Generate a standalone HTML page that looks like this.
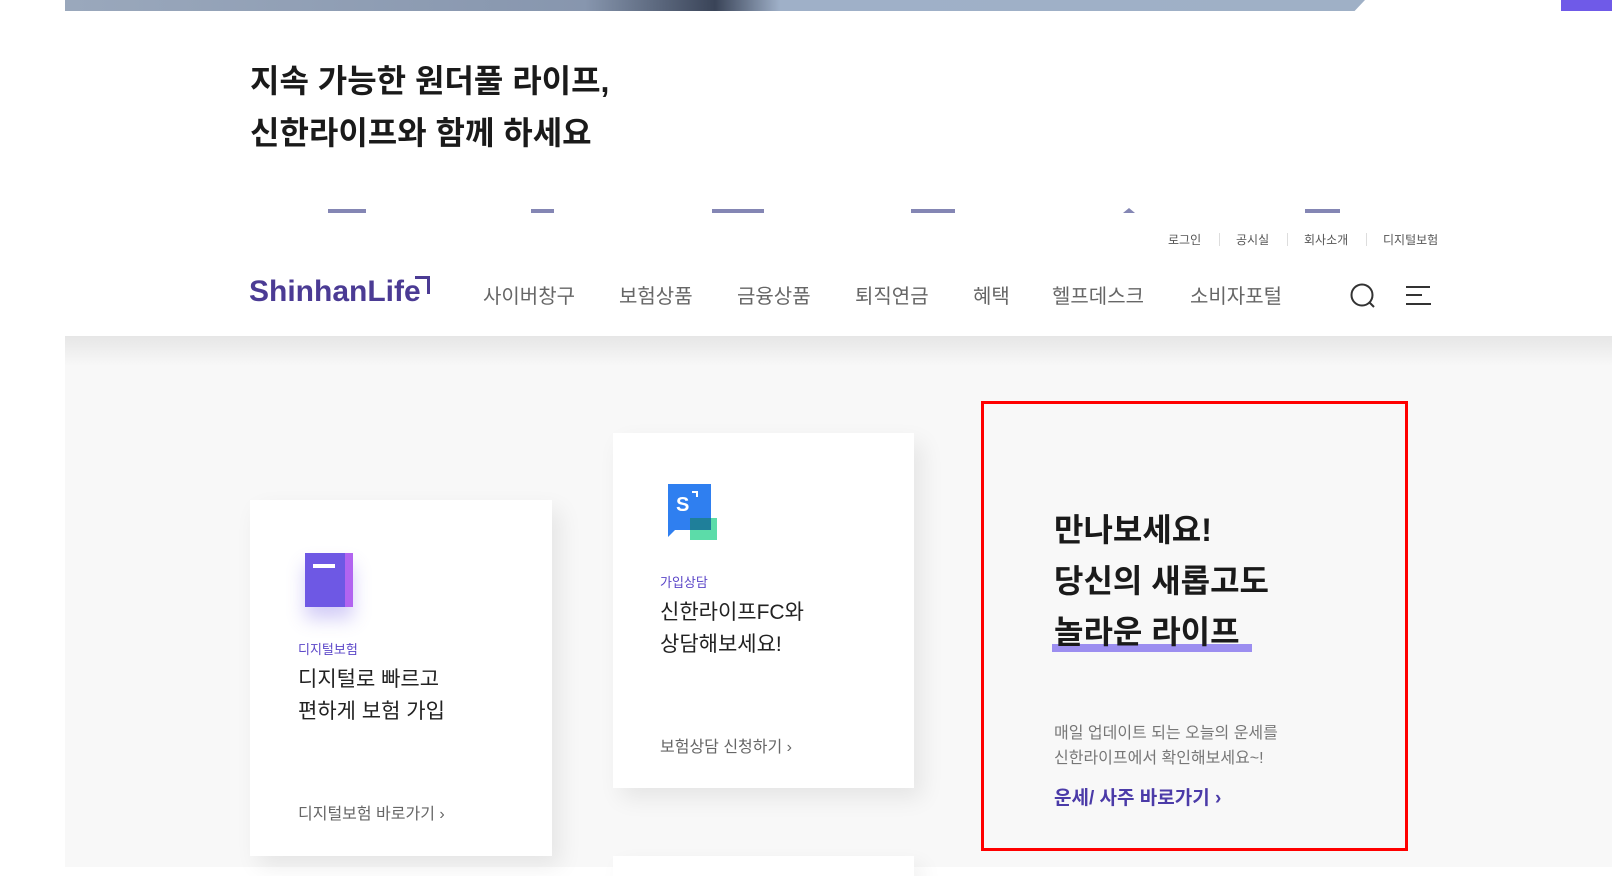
<!DOCTYPE html>
<html><head><meta charset="utf-8"><style>
*{margin:0;padding:0;box-sizing:border-box}
body{width:1612px;height:867px;overflow:hidden;background:#fff;position:relative;font-family:"Liberation Sans","Noto Sans CJK KR",sans-serif;color:#222}
.a{position:absolute;white-space:nowrap}
.bar{position:absolute;top:209px;height:4px;background:#8486b4}
.nav{font-size:20px;color:#666;top:280px}
.util{font-size:12px;color:#555;top:231px}
.sep{position:absolute;top:233px;width:1px;height:13px;background:#ddd}
.card{position:absolute;background:#fff;box-shadow:8px 10px 22px rgba(0,0,0,0.08)}
</style></head><body>
<div class="a" style="left:65px;top:0;width:1300px;height:11px;background:linear-gradient(90deg,#9aa8bc 0%,#8796ae 40%,#3a4458 50%,#9fb0c8 55%,#9fb0c6 100%);clip-path:polygon(0 0,100% 0,99.2% 100%,0 100%)"></div>
<div class="a" style="left:1561px;top:0;width:51px;height:11px;background:#6f5ae8"></div>
<div class="a" style="left:250px;top:55px;font-size:32px;font-weight:bold;line-height:52px;color:#1a1a1a">지속 가능한 원더풀 라이프,<br>신한라이프와 함께 하세요</div>
<div class="bar" style="left:328px;width:38px"></div>
<div class="bar" style="left:531px;width:23px"></div>
<div class="bar" style="left:712px;width:52px"></div>
<div class="bar" style="left:911px;width:44px"></div>
<div class="a" style="left:1123px;top:208px;width:0;height:0;border-left:6px solid transparent;border-right:6px solid transparent;border-bottom:5px solid #8486b4"></div>
<div class="bar" style="left:1305px;width:35px"></div>
<div class="a util" style="left:1168px">로그인</div>
<div class="sep" style="left:1219px"></div>
<div class="a util" style="left:1236px">공시실</div>
<div class="sep" style="left:1287px"></div>
<div class="a util" style="left:1304px">회사소개</div>
<div class="sep" style="left:1366px"></div>
<div class="a util" style="left:1383px">디지털보험</div>
<div class="a" style="left:249px;top:275px;font-size:30px;font-weight:bold;color:#4b3b94">ShinhanLife</div>
<div class="a" style="left:415px;top:276px;width:15px;height:18px;border-top:3px solid #4b3b94;border-right:3px solid #4b3b94"></div>
<div class="a nav" style="left:483px">사이버창구</div>
<div class="a nav" style="left:619px">보험상품</div>
<div class="a nav" style="left:737px">금융상품</div>
<div class="a nav" style="left:855px">퇴직연금</div>
<div class="a nav" style="left:973px">혜택</div>
<div class="a nav" style="left:1052px">헬프데스크</div>
<div class="a nav" style="left:1190px">소비자포털</div>
<svg class="a" style="left:1348px;top:281px" width="30" height="30" viewBox="0 0 30 30"><circle cx="14" cy="14" r="10.5" fill="none" stroke="#333" stroke-width="2"/><line x1="21.5" y1="21.5" x2="26" y2="26" stroke="#333" stroke-width="2"/></svg>
<svg class="a" style="left:1404px;top:284px" width="28" height="24"><line x1="2" y1="3" x2="26" y2="3" stroke="#333" stroke-width="2"/><line x1="2" y1="11" x2="18" y2="11" stroke="#333" stroke-width="2"/><line x1="2" y1="20" x2="27" y2="20" stroke="#333" stroke-width="2"/></svg>
<div class="a" style="left:65px;top:336px;width:1547px;height:531px;background:#f8f8f8"></div>
<div class="a" style="left:65px;top:336px;width:1547px;height:30px;background:linear-gradient(#e6e6e6,#f8f8f8)"></div>
<div class="card" style="left:250px;top:500px;width:302px;height:356px"></div>
<div class="a" style="left:305px;top:553px;width:48px;height:54px;background:#6e58e4;box-shadow:0 12px 18px rgba(110,88,228,0.3)"></div>
<div class="a" style="left:345px;top:553px;width:8px;height:54px;background:#b264f0"></div>
<div class="a" style="left:313px;top:564px;width:22px;height:4px;background:#fff"></div>
<div class="a" style="left:298px;top:639px;font-size:13px;color:#5b46c8">디지털보험</div>
<div class="a" style="left:298px;top:664px;font-size:21px;line-height:32px;color:#222">디지털로 빠르고<br>편하게 보험 가입</div>
<div class="a" style="left:298px;top:800px;font-size:16px;color:#666">디지털보험 바로가기 ›</div>
<div class="card" style="left:613px;top:433px;width:301px;height:355px"></div>
<div class="card" style="left:613px;top:856px;width:301px;height:20px"></div>
<svg class="a" style="left:664px;top:480px" width="62" height="60"><path d="M4 4h43v46H11l-7 7z" fill="#2f7ff0"/><path d="M26 38h27v27l-5-5H26z" fill="#40d69a" opacity="0.85"/><path d="M26 38h21v12H26z" fill="#1f7f9a"/><text x="12" y="31" font-size="20" font-weight="bold" fill="#fff" font-family="Liberation Sans">S</text><path d="M28 12h5v5" stroke="#fff" stroke-width="2" fill="none"/></svg>
<div class="a" style="left:660px;top:572px;font-size:13px;color:#5b46c8">가입상담</div>
<div class="a" style="left:660px;top:597px;font-size:21px;line-height:32px;color:#222">신한라이프FC와<br>상담해보세요!</div>
<div class="a" style="left:660px;top:733px;font-size:16px;color:#666">보험상담 신청하기 ›</div>
<div class="a" style="left:981px;top:401px;width:427px;height:450px;border:3px solid #f00"></div>
<div class="a" style="left:1052px;top:644px;width:200px;height:8px;background:#9c8ef0"></div>
<div class="a" style="left:1054px;top:505px;font-size:32px;font-weight:bold;line-height:51px;color:#1a1a1a">만나보세요!<br>당신의 새롭고도<br>놀라운 라이프</div>
<div class="a" style="left:1054px;top:721px;font-size:16px;line-height:25px;color:#777">매일 업데이트 되는 오늘의 운세를<br>신한라이프에서 확인해보세요~!</div>
<div class="a" style="left:1054px;top:783px;font-size:19px;font-weight:bold;color:#4b3ba8">운세/ 사주 바로가기 ›</div>
</body></html>
